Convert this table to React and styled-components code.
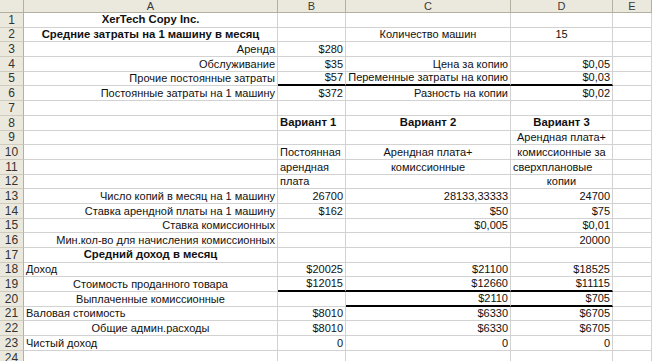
import React from "react";
import styled, { createGlobalStyle } from "styled-components";

const GlobalStyle = createGlobalStyle`
  html, body {
    margin: 0;
    background: #ffffff;
  }
`;

const COLS = ["A", "B", "C", "D", "E"];

const L = (t, o = {}) => ({ t, a: "left", ...o });
const R = (t, o = {}) => ({ t, a: "right", ...o });
const M = (t, o = {}) => ({ t, a: "center", ...o });

const ROWS = [
    [M("XerTech Copy Inc.", { b: 1 })],
    [M("Средние затраты на 1 машину в месяц", { b: 1 }), null, M("Количество машин"), M("15")],
    [R("Аренда"), R("$280")],
    [R("Обслуживание"), R("$35"), R("Цена за копию"), R("$0,05")],
    [R("Прочие постоянные затраты"), R("$57", { line: 1 }), R("Переменные затраты на копию", { line: 1 }), R("$0,03", { line: 1 })],
    [R("Постоянные затраты на 1 машину"), R("$372"), R("Разность на копии"), R("$0,02")],
    [],
    [null, L("Вариант 1", { b: 1 }), M("Вариант 2", { b: 1 }), M("Вариант 3", { b: 1 })],
    [null, null, null, M("Арендная плата+")],
    [null, L("Постоянная"), M("Арендная плата+"), M("комиссионные за")],
    [null, L("арендная"), M("комиссионные"), L("сверхплановые")],
    [null, L("плата"), null, M("копии")],
    [R("Число копий в месяц на 1 машину"), R("26700"), R("28133,33333"), R("24700")],
    [R("Ставка арендной платы на 1 машину"), R("$162"), R("$50"), R("$75")],
    [R("Ставка комиссионных"), null, R("$0,005"), R("$0,01")],
    [R("Мин.кол-во для начисления комиссионных"), null, null, R("20000")],
    [M("Средний доход в месяц", { b: 1 })],
    [L("Доход"), R("$20025"), R("$21100"), R("$18525")],
    [M("Стоимость проданного товара"), R("$12015", { line: 1 }), R("$12660", { line: 1 }), R("$11115", { line: 1 })],
    [M("Выплаченные комиссионные"), null, R("$2110", { line: 1 }), R("$705", { line: 1 })],
    [L("Валовая стоимость"), R("$8010"), R("$6330"), R("$6705")],
    [M("Общие админ.расходы"), R("$8010"), R("$6330"), R("$6705")],
    [L("Чистый доход"), R("0"), R("0"), R("0")],
    [],
];

const Sheet = styled.div`
  display: grid;
  grid-template-columns: 24px 254px 68px 165px 102px 39px;
  grid-template-rows: 13px repeat(24, 14.7px);
  width: 652px;
  height: 361px;
  overflow: hidden;
  font-family: "Liberation Sans", Arial, sans-serif;
  font-size: 11px;
  color: #111111;
  background: #ffffff;
`;

const Header = styled.div`
  box-sizing: border-box;
  display: flex;
  align-items: center;
  justify-content: center;
  background: #ebe9de;
  border-right: 1px solid #b3b0a2;
  border-bottom: 1px solid #b3b0a2;
  color: #3a3a3a;
  font-size: 11px;
  line-height: 1;
`;

const RowNum = styled(Header)`
  align-items: flex-end;
  padding-bottom: 1px;
  border-bottom-color: #cfccbf;
  font-size: 12px;
  color: #333333;
`;

const Cell = styled.div`
  box-sizing: border-box;
  display: flex;
  align-items: flex-end;
  justify-content: ${({ $align }) =>
        $align === "right" ? "flex-end" : $align === "center" ? "center" : "flex-start"};
  padding: 0 2px 1px 2px;
  white-space: nowrap;
  line-height: 1;
  font-size: ${({ $bold }) => ($bold ? "11.3px" : "11px")};
  font-weight: ${({ $bold }) => ($bold ? 700 : 400)};
  border-right: 1px solid #d2d2d2;
  border-bottom: ${({ $line }) => ($line ? "2px solid #000000" : "1px solid #d2d2d2")};
`;

export default function App() {
    return (
        <>
            <GlobalStyle />
            <Sheet>
                <Header />
                {COLS.map((c) => (
                    <Header key={c}>{c}</Header>
                ))}
                {ROWS.map((row, i) => (
                    <React.Fragment key={i}>
                        <RowNum>{i + 1}</RowNum>
                        {COLS.map((c, j) => {
                            const cell = row[j];
                            return (
                                <Cell
                                    key={c}
                                    $align={cell ? cell.a : "left"}
                                    $bold={cell && cell.b}
                                    $line={cell && cell.line}
                                >
                                    {cell ? cell.t : ""}
                                </Cell>
                            );
                        })}
                    </React.Fragment>
                ))}
            </Sheet>
        </>
    );
}
